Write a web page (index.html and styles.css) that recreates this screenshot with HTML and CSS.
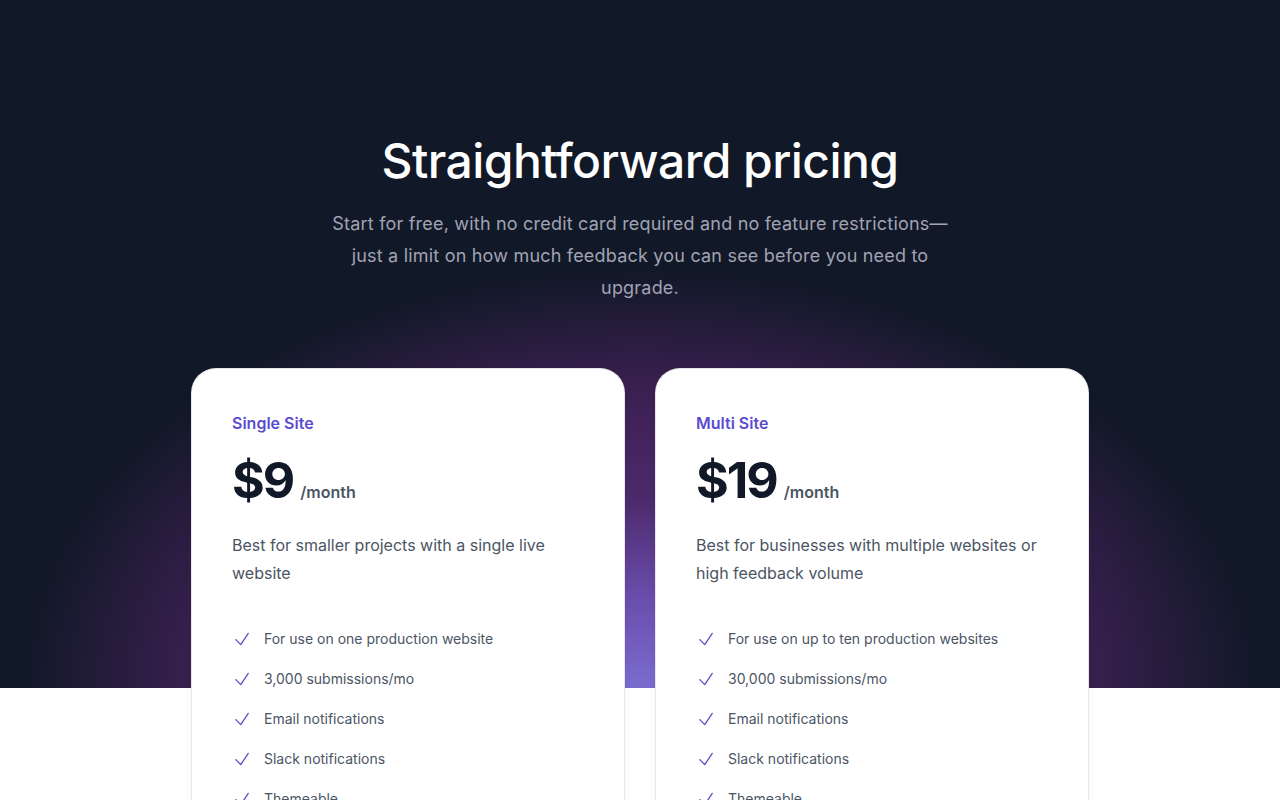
FILE: index.html
```html
<!DOCTYPE html>
<html lang="en">
<head>
  <meta charset="UTF-8">
  <meta name="viewport" content="width=device-width, initial-scale=1.0">
  <title>Pricing</title>
  <link rel="stylesheet" href="styles.css">
</head>
<body>
  <section class="pricing">
    <div class="intro">
      <h1>Straightforward pricing</h1>
      <p>Start for free, with no credit card required and no feature restrictions—just a limit on how much feedback you can see before you need to upgrade.</p>
    </div>

    <div class="plans">
      <div class="plan">
        <h2>Single Site</h2>
        <div class="price"><span class="amount">$9</span><span class="per">/month</span></div>
        <p class="desc">Best for smaller projects with a single live website</p>
        <ul class="features">
          <li><svg viewBox="0 0 24 24"><path d="M4.5 12.75l6 6 9-13.5"/></svg>For use on one production website</li>
          <li><svg viewBox="0 0 24 24"><path d="M4.5 12.75l6 6 9-13.5"/></svg>3,000 submissions/mo</li>
          <li><svg viewBox="0 0 24 24"><path d="M4.5 12.75l6 6 9-13.5"/></svg>Email notifications</li>
          <li><svg viewBox="0 0 24 24"><path d="M4.5 12.75l6 6 9-13.5"/></svg>Slack notifications</li>
          <li><svg viewBox="0 0 24 24"><path d="M4.5 12.75l6 6 9-13.5"/></svg>Themeable</li>
        </ul>
      </div>

      <div class="plan">
        <h2>Multi Site</h2>
        <div class="price"><span class="amount">$19</span><span class="per">/month</span></div>
        <p class="desc">Best for businesses with multiple websites or high feedback volume</p>
        <ul class="features">
          <li><svg viewBox="0 0 24 24"><path d="M4.5 12.75l6 6 9-13.5"/></svg>For use on up to ten production websites</li>
          <li><svg viewBox="0 0 24 24"><path d="M4.5 12.75l6 6 9-13.5"/></svg>30,000 submissions/mo</li>
          <li><svg viewBox="0 0 24 24"><path d="M4.5 12.75l6 6 9-13.5"/></svg>Email notifications</li>
          <li><svg viewBox="0 0 24 24"><path d="M4.5 12.75l6 6 9-13.5"/></svg>Slack notifications</li>
          <li><svg viewBox="0 0 24 24"><path d="M4.5 12.75l6 6 9-13.5"/></svg>Themeable</li>
        </ul>
      </div>
    </div>
  </section>
</body>
</html>
```

FILE: styles.css
```css
body {
  margin: 0;
  font-family: Inter, 'Noto Sans', sans-serif;
  background: #fff;
}
.pricing {
  padding: 132px 0 80px;
  background:
    radial-gradient(ellipse 620px 420px at 50% 100%, #7a6dd0 0%, #6a4cab 22%, #4c2a6c 45%, #3c2052 70%, rgba(17, 24, 39, 0) 100%) top / 100% 688px no-repeat,
    linear-gradient(#111827, #111827) top / 100% 688px no-repeat,
    #fff;
}
.intro {
  text-align: center;
  max-width: 620px;
  margin: 0 auto;
}
.intro h1 {
  margin: 0;
  font-size: 48px;
  font-weight: 500;
  letter-spacing: -0.012em;
  line-height: 58px;
  color: #fff;
}
.intro p {
  margin: 18px 0 0;
  font-size: 18px;
  line-height: 32px;
  letter-spacing: 0.2px;
  color: #a1a3b4;
}
.plans {
  display: grid;
  grid-template-columns: 432px 432px;
  gap: 32px;
  justify-content: center;
  margin-top: 65px;
}
.plan {
  background: #fff;
  border-radius: 24px;
  padding: 40px;
  box-shadow: 0 0 0 1px #e5e7eb, 0 4px 12px rgba(0, 0, 0, 0.04);
}
.plan h2 {
  margin: 0;
  font-size: 16px;
  line-height: 28px;
  font-weight: 600;
  color: #5b4ccf;
}
.price {
  display: flex;
  align-items: baseline;
  gap: 7px;
  margin-top: 16px;
}
.amount {
  font-size: 50px;
  line-height: 54px;
  font-weight: 700;
  letter-spacing: -0.04em;
  color: #111827;
}
.per {
  font-size: 16px;
  font-weight: 600;
  color: #4b5563;
}
.desc {
  margin: 24px 0 0;
  font-size: 16px;
  line-height: 28px;
  color: #4b5563;
}
.features {
  list-style: none;
  margin: 40px 0 0;
  padding: 0;
  display: flex;
  flex-direction: column;
  gap: 16px;
}
.features li {
  display: flex;
  align-items: center;
  gap: 12px;
  font-size: 14px;
  line-height: 24px;
  color: #4b5563;
}
.features svg {
  width: 20px;
  height: 20px;
  fill: none;
  stroke: #5b4ccf;
  stroke-width: 1.6;
  stroke-linecap: round;
  stroke-linejoin: round;
}
```
